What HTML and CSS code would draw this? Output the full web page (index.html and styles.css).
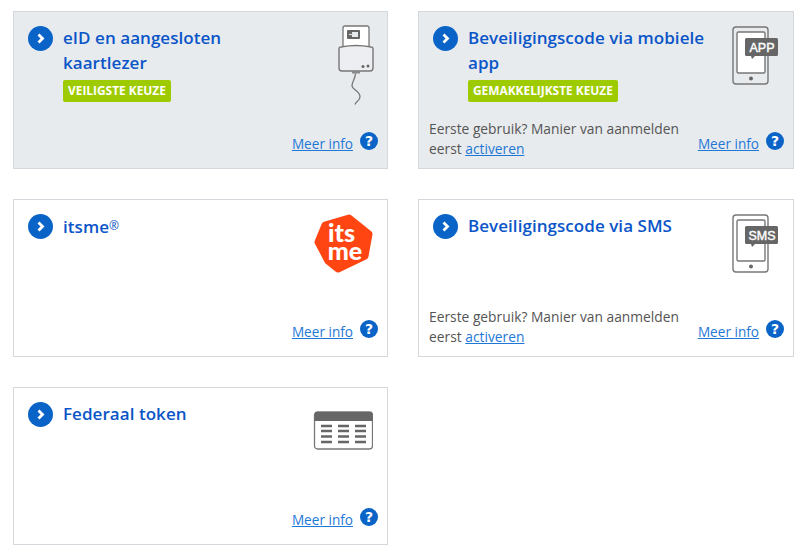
FILE: index.html
```html
<!DOCTYPE html>
<html lang="nl">
<head>
<meta charset="utf-8">
<title>Aanmelden</title>
<link rel="stylesheet" href="styles.css">
</head>
<body>
<main class="grid">
  <article class="card card-hl">
    <div class="top">
      <svg class="arrow" viewBox="0 0 25 25"><circle cx="12.5" cy="12.5" r="12.5" fill="#0a64c8"/><path d="M10.5 8.500l4 4-4 4" fill="none" stroke="#fff" stroke-width="2.800"/></svg>
      <div class="head">
        <h2 class="title">eID en aangesloten kaartlezer</h2>
        <span class="badge">VEILIGSTE KEUZE</span>
      </div>
      <svg class="pic pic-eid" viewBox="0 0 36 80">
        <path d="M5 22V3a2 2 0 0 1 2-2h22a2 2 0 0 1 2 2v19" fill="#fff" stroke="#777" stroke-width="1.300"/>
        <rect x="9" y="5" width="13" height="9" rx="1" fill="#666"/>
        <rect x="14" y="7" width="6" height="5" fill="#e8ebee"/>
        <path d="M11 9.500h4" stroke="#ddd" stroke-width="1.200"/>
        <path d="M3 22q15-3 30 0a2 2 0 0 1 2 2v19a3 3 0 0 1-3 3H4a3 3 0 0 1-3-3V24a2 2 0 0 1 2-2z" fill="#eceef1" stroke="#777" stroke-width="1.400"/>
        <circle cx="25" cy="41.500" r="1.500" fill="#666"/><circle cx="30" cy="41" r="1.500" fill="#666"/>
        <rect x="14" y="46" width="8" height="2.500" fill="#888"/>
        <path d="M17.500 48.500c0 5-3.500 8-3.500 12s8 6 8 11-4 4-5 8" fill="none" stroke="#777" stroke-width="1.300"/>
      </svg>
    </div>
    <div class="foot">
      <div class="more"><a href="#" class="link">Meer info</a>
        <svg class="help" viewBox="0 0 18 18"><circle cx="9" cy="9" r="9" fill="#0a64c8"/><text x="9" y="14" class="help-q">?</text></svg></div>
    </div>
  </article>

  <article class="card card-hl">
    <div class="top">
      <svg class="arrow" viewBox="0 0 25 25"><circle cx="12.5" cy="12.5" r="12.5" fill="#0a64c8"/><path d="M10.5 8.500l4 4-4 4" fill="none" stroke="#fff" stroke-width="2.800"/></svg>
      <div class="head">
        <h2 class="title">Beveiligingscode via mobiele app</h2>
        <span class="badge">GEMAKKELIJKSTE KEUZE</span>
      </div>
      <svg class="pic pic-phone" viewBox="0 0 47 60">
        <rect x="1" y="1" width="35" height="57" rx="3" fill="none" stroke="#777" stroke-width="1.400"/>
        <rect x="5" y="6" width="28" height="41" rx="1.500" fill="#fff" stroke="#777" stroke-width="1.400"/>
        <circle cx="19" cy="52.500" r="2" fill="#666"/>
        <path d="M14.500 12h30a1.500 1.500 0 0 1 1.500 1.500v15a1.500 1.500 0 0 1-1.500 1.500H23l-3 3-1-3h-4.500a1.500 1.500 0 0 1-1.500-1.500v-15a1.500 1.500 0 0 1 1.500-1.500z" fill="#666"/>
        <text x="30" y="25.500" class="bubble">APP</text>
      </svg>
    </div>
    <div class="foot">
      <p class="note">Eerste gebruik? Manier van aanmelden eerst <a href="#" class="link">activeren</a></p>
      <div class="more"><a href="#" class="link">Meer info</a>
        <svg class="help" viewBox="0 0 18 18"><circle cx="9" cy="9" r="9" fill="#0a64c8"/><text x="9" y="14" class="help-q">?</text></svg></div>
    </div>
  </article>

  <article class="card">
    <div class="top">
      <svg class="arrow" viewBox="0 0 25 25"><circle cx="12.5" cy="12.5" r="12.5" fill="#0a64c8"/><path d="M10.5 8.500l4 4-4 4" fill="none" stroke="#fff" stroke-width="2.800"/></svg>
      <div class="head">
        <h2 class="title">itsme<span class="reg">®</span></h2>
      </div>
      <svg class="pic pic-itsme" viewBox="0 0 60 60">
        <polygon points="11,11 35,4 55,20 51,42 24,55 14,47 4,28" fill="#ff4612" stroke="#ff4612" stroke-width="7" stroke-linejoin="round"/>
        <text x="27.500" y="28" class="logo">its</text>
        <text x="31" y="46" class="logo">me</text>
      </svg>
    </div>
    <div class="foot">
      <div class="more"><a href="#" class="link">Meer info</a>
        <svg class="help" viewBox="0 0 18 18"><circle cx="9" cy="9" r="9" fill="#0a64c8"/><text x="9" y="14" class="help-q">?</text></svg></div>
    </div>
  </article>

  <article class="card">
    <div class="top">
      <svg class="arrow" viewBox="0 0 25 25"><circle cx="12.5" cy="12.5" r="12.5" fill="#0a64c8"/><path d="M10.5 8.500l4 4-4 4" fill="none" stroke="#fff" stroke-width="2.800"/></svg>
      <div class="head">
        <h2 class="title">Beveiligingscode via SMS</h2>
      </div>
      <svg class="pic pic-phone" viewBox="0 0 47 60">
        <rect x="1" y="1" width="35" height="57" rx="3" fill="none" stroke="#777" stroke-width="1.400"/>
        <rect x="5" y="6" width="28" height="41" rx="1.500" fill="#fff" stroke="#777" stroke-width="1.400"/>
        <circle cx="19" cy="52.500" r="2" fill="#666"/>
        <path d="M14.500 12h30a1.500 1.500 0 0 1 1.500 1.500v15a1.500 1.500 0 0 1-1.500 1.500H23l-3 3-1-3h-4.500a1.500 1.500 0 0 1-1.500-1.500v-15a1.500 1.500 0 0 1 1.500-1.500z" fill="#666"/>
        <text x="30" y="25.500" class="bubble">SMS</text>
      </svg>
    </div>
    <div class="foot">
      <p class="note">Eerste gebruik? Manier van aanmelden eerst <a href="#" class="link">activeren</a></p>
      <div class="more"><a href="#" class="link">Meer info</a>
        <svg class="help" viewBox="0 0 18 18"><circle cx="9" cy="9" r="9" fill="#0a64c8"/><text x="9" y="14" class="help-q">?</text></svg></div>
    </div>
  </article>

  <article class="card">
    <div class="top">
      <svg class="arrow" viewBox="0 0 25 25"><circle cx="12.5" cy="12.5" r="12.5" fill="#0a64c8"/><path d="M10.5 8.500l4 4-4 4" fill="none" stroke="#fff" stroke-width="2.800"/></svg>
      <div class="head">
        <h2 class="title">Federaal token</h2>
      </div>
      <svg class="pic pic-token" viewBox="0 0 60 39">
        <rect x="1.500" y="1" width="58" height="37" rx="3" fill="#fff" stroke="#777" stroke-width="1.300"/>
        <path d="M1.500 10V3.500A2.500 2.500 0 0 1 4 1h53a2.500 2.500 0 0 1 2.500 2.500V10z" fill="#666"/>
        <path d="M8 15h11M25 15h11M42 15h11M8 20h11M25 20h11M42 20h11M8 25.500h11M25 25.500h11M42 25.500h11M8 31h11M25 31h11M42 31h11" stroke="#666" stroke-width="2.600"/>
      </svg>
    </div>
    <div class="foot">
      <div class="more"><a href="#" class="link">Meer info</a>
        <svg class="help" viewBox="0 0 18 18"><circle cx="9" cy="9" r="9" fill="#0a64c8"/><text x="9" y="14" class="help-q">?</text></svg></div>
    </div>
  </article>
</main>
</body>
</html>
```
FILE: styles.css
```css
* { box-sizing: border-box; }
html, body { margin: 0; padding: 0; background: #fff; }
body { font-family: "Open Sans", "Noto Sans", sans-serif; width: 803px; height: 556px; overflow: hidden; }
.grid {
  display: grid;
  grid-template-columns: 375px 376px;
  grid-auto-rows: 158px;
  column-gap: 30px;
  row-gap: 30px;
  padding: 11px 0 0 13px;
}
.card {
  display: flex;
  flex-direction: column;
  border: 1px solid #d5d9dd;
  background: #fff;
  padding: 14px 4px 9px 14px;
}
.card-hl { background: #e8ebee; }
.top { display: flex; align-items: flex-start; flex: 1; min-height: 0; }
.arrow { width: 25px; height: 25px; flex: none; margin-right: 10px; }
.head { flex: 1; min-width: 0; }
.title {
  margin: -1px 0 0;
  width: 240px;
  font-size: 17px;
  letter-spacing: 0.05px;
  line-height: 25px;
  font-weight: 600;
  color: #0a55c8;
}
.reg { font-size: 12px; vertical-align: 3px; font-weight: 400; }
.badge {
  display: inline-block;
  margin-top: 5px;
  height: 22px;
  line-height: 21px;
  padding: 0 5px;
  border-radius: 2px;
  background: #9ecb00;
  color: #fff;
  font-size: 11.900px;
  font-weight: 700;
  white-space: nowrap;
}
.pic { flex: none; }
.pic-eid { width: 36px; height: 80px; margin: -1px 9px 0 0; }
.pic-phone { width: 47px; height: 60px; margin: 0 10px 0 0; }
.pic-itsme { width: 60px; height: 60px; margin: 0 9px 0 0; }
.pic-token { width: 60px; height: 39px; margin: 9px 10px 0 0; }
.foot { display: flex; align-items: flex-end; min-height: 40px; }
.note {
  margin: 0 0 0 -4px;
  width: 265px;
  font-size: 13.800px;
  line-height: 20px;
  color: #555;
}
.link { color: #1f78d6; text-decoration: underline; }
.more { margin: 0 5px 5px auto; display: flex; align-items: flex-start; font-size: 13.600px; line-height: 20px; }
.help { width: 18px; height: 18px; margin: -2px 0 0 7px; }
.help-q { font-family: "DejaVu Sans", sans-serif; font-size: 14px; font-weight: 700; fill: #fff; text-anchor: middle; }
.bubble { font-family: "Liberation Sans", sans-serif; font-size: 12.500px; fill: #fff; stroke: #fff; stroke-width: 0.4px; text-anchor: middle; }
.logo { font-family: "Lato", sans-serif; font-size: 25px; font-weight: 900; fill: #fff; text-anchor: middle; }
```
